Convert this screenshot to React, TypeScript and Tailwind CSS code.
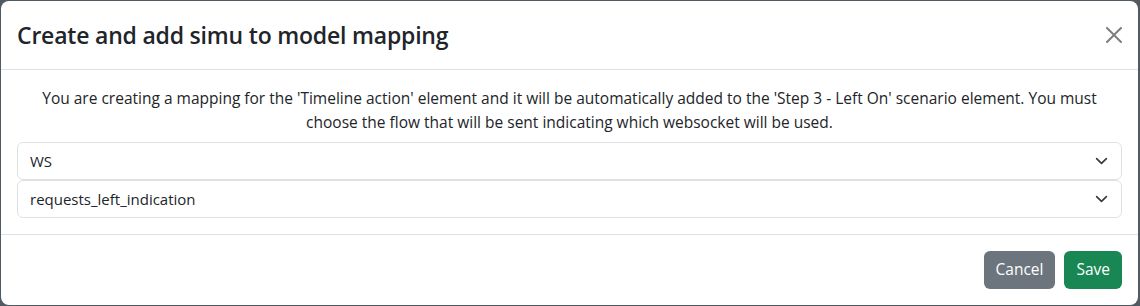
import { ChangeEvent, useState } from 'react'

const FONT = { fontFamily: '"Open Sans", "Noto Sans", Arial, sans-serif' }

function Chevron() {
  return (
    <svg viewBox="0 0 16 16" className="w-[13px] h-[13px]" fill="none" aria-hidden="true">
      <path d="m2 5 6 6 6-6" stroke="#343a40" strokeWidth="2" strokeLinecap="round" strokeLinejoin="round" />
    </svg>
  )
}

function Select({ value, options, onChange }: { value: string; options: string[]; onChange: (v: string) => void }) {
  return (
    <div className="relative flex items-center h-[38px] rounded-md border border-[#dee2e6] bg-white">
      <select
        value={value}
        onChange={(e: ChangeEvent<HTMLSelectElement>) => onChange(e.target.value)}
        className="flex-1 min-w-0 appearance-none h-full pl-3 pr-9 bg-transparent text-[15px] text-[#212529] outline-none"
      >
        {options.map((o) => (
          <option key={o}>{o}</option>
        ))}
      </select>
      <span className="absolute right-[13px] top-1/2 -translate-y-1/2 pointer-events-none flex">
        <Chevron />
      </span>
    </div>
  )
}

export default function App() {
  const [socket, setSocket] = useState('WS')
  const [flow, setFlow] = useState('requests_left_indication')

  return (
    <div className="h-[306px] bg-[#4f5a62] pt-px pl-px pr-[2px] pb-px" style={FONT}>
      <div className="h-full bg-white rounded-lg flex flex-col">
        {/* Header */}
        <div className="flex items-center justify-between px-4 py-4 border-b border-[#dee2e6]">
          <h4 className="text-[23px] leading-[36px] font-semibold text-[#212529] tracking-[-0.2px]">
            Create and add simu to model mapping
          </h4>
          <button aria-label="Close" className="p-1 -mr-1 opacity-50 hover:opacity-75">
            <svg viewBox="0 0 16 16" className="w-4 h-4" fill="#000" aria-hidden="true">
              <path d="M.293.293a1 1 0 0 1 1.414 0L8 6.586 14.293.293a1 1 0 1 1 1.414 1.414L9.414 8l6.293 6.293a1 1 0 0 1-1.414 1.414L8 9.414l-6.293 6.293a1 1 0 0 1-1.414-1.414L6.586 8 .293 1.707a1 1 0 0 1 0-1.414z" />
            </svg>
          </button>
        </div>

        {/* Body */}
        <div className="p-4 border-b border-[#dee2e6]">
          <p className="text-center text-[15.5px] leading-6 text-[#212529] mb-2 px-[18px]">
            You are creating a mapping for the 'Timeline action' element and it will be automatically added to the
            'Step 3 - Left On' scenario element. You must choose the flow that will be sent indicating which
            websocket will be used.
          </p>
          <div className="flex flex-col">
            <Select value={socket} options={['WS']} onChange={setSocket} />
            <Select value={flow} options={['requests_left_indication']} onChange={setFlow} />
          </div>
        </div>

        {/* Footer */}
        <div className="flex justify-end gap-[9px] px-4 py-4">
          <button className="h-[38px] px-3 rounded-md bg-[#6c757d] text-white text-[15.5px] hover:bg-[#5c636a]">
            Cancel
          </button>
          <button className="h-[38px] px-3 rounded-md bg-[#198754] text-white text-[15.5px] hover:bg-[#157347]">
            Save
          </button>
        </div>
      </div>
    </div>
  )
}
